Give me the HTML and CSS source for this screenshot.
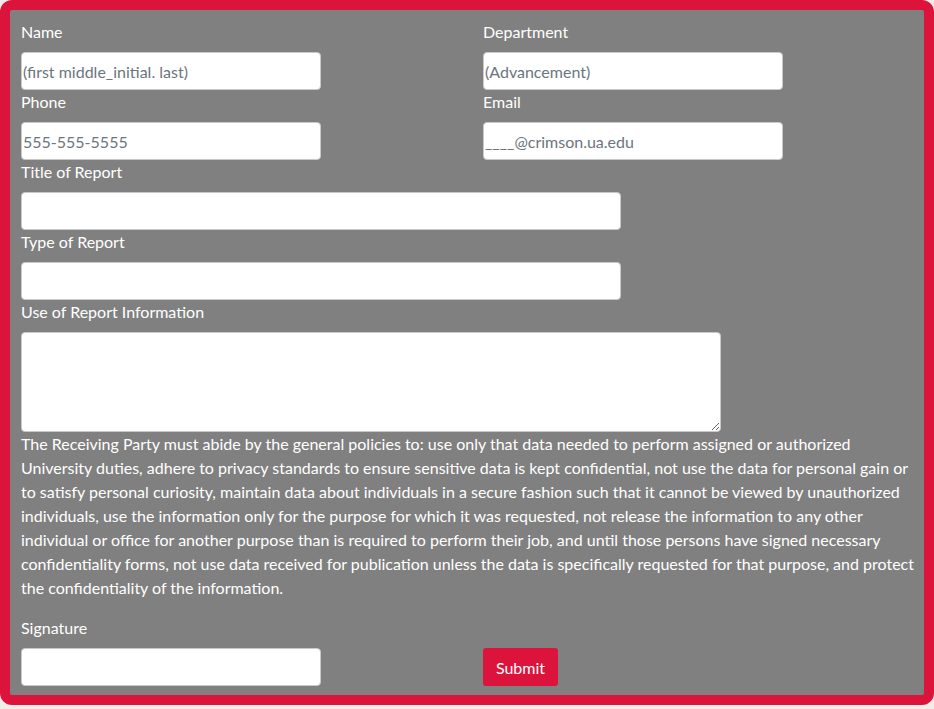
FILE: index.html
```html
<!DOCTYPE html>
<html>
<head>
<meta charset="utf-8">
<link rel="stylesheet" href="styles.css">
</head>
<body>
<form class="frame">
  <div class="pair">
    <div class="field">
      <label class="lbl">Name</label>
      <input class="inp w300" type="text" placeholder="(first middle_initial. last)">
    </div>
    <div class="field">
      <label class="lbl">Department</label>
      <input class="inp w300" type="text" placeholder="(Advancement)">
    </div>
  </div>
  <div class="pair">
    <div class="field">
      <label class="lbl">Phone</label>
      <input class="inp w300" type="text" placeholder="555-555-5555">
    </div>
    <div class="field">
      <label class="lbl">Email</label>
      <input class="inp w300" type="text" placeholder="____@crimson.ua.edu">
    </div>
  </div>
  <div class="field">
    <label class="lbl">Title of Report</label>
    <input class="inp w600" type="text">
  </div>
  <div class="field">
    <label class="lbl">Type of Report</label>
    <input class="inp w600" type="text">
  </div>
  <div class="field">
    <label class="lbl">Use of Report Information</label>
    <textarea class="area"></textarea>
  </div>
  <p class="policy">The Receiving Party must abide by the general policies to: use only that data needed to perform assigned or authorized University duties, adhere to privacy standards to ensure sensitive data is kept confidential, not use the data for personal gain or to satisfy personal curiosity, maintain data about individuals in a secure fashion such that it cannot be viewed by unauthorized individuals, use the information only for the purpose for which it was requested, not release the information to any other individual or office for another purpose than is required to perform their job, and until those persons have signed necessary confidentiality forms, not use data received for publication unless the data is specifically requested for that purpose, and protect the confidentiality of the information.</p>
  <div class="pair sig">
    <div class="field">
      <label class="lbl">Signature</label>
      <input class="inp w300" type="text">
    </div>
    <div class="field end">
      <button class="submit" type="button">Submit</button>
    </div>
  </div>
</form>
</body>
</html>
```
FILE: styles.css
```css
html, body {
  margin: 0;
  padding: 0;
  background: #f1eee9;
}
body {
  font-family: Lato, "Open Sans", sans-serif;
  font-size: 16px;
  height: 709px;
}
.frame {
  box-sizing: border-box;
  width: 934px;
  height: 705px;
  margin: 0;
  border: 10px solid #dc143c;
  border-radius: 12px;
  background: #808080;
  padding: 10px 4px 9px 11px;
  color: #ffffff;
}
.pair {
  display: grid;
  grid-template-columns: 462px auto;
}
.field {
  display: flex;
  flex-direction: column;
  align-items: flex-start;
}
.lbl {
  display: block;
  line-height: 24px;
  margin-bottom: 8px;
  color: #ffffff;
}
.inp {
  box-sizing: border-box;
  height: 38px;
  border: 1px solid #c9c9c9;
  border-radius: 4px;
  background: #fff;
  padding: 0 1px;
  font-family: Lato, "Open Sans", sans-serif;
  font-size: 16px;
  color: #495057;
  outline: none;
}
.inp::placeholder {
  color: #6c757d;
}
.w300 { width: 300px; }
.w600 { width: 600px; }
.area {
  box-sizing: border-box;
  display: block;
  width: 700px;
  height: 100px;
  border: 1px solid #c9c9c9;
  border-radius: 4px;
  background: #fff;
  margin: 0;
  font-family: Lato, "Open Sans", sans-serif;
  font-size: 16px;
}
.policy {
  margin: 0 0 16px 0;
  line-height: 24px;
  color: #ffffff;
}
.end {
  justify-content: flex-end;
}
.submit {
  box-sizing: border-box;
  height: 38px;
  width: 75px;
  border: none;
  border-radius: 3px;
  background: #dc143c;
  color: #fff;
  font-family: Lato, "Open Sans", sans-serif;
  font-size: 16px;
  padding: 0;
  cursor: pointer;
}
```
